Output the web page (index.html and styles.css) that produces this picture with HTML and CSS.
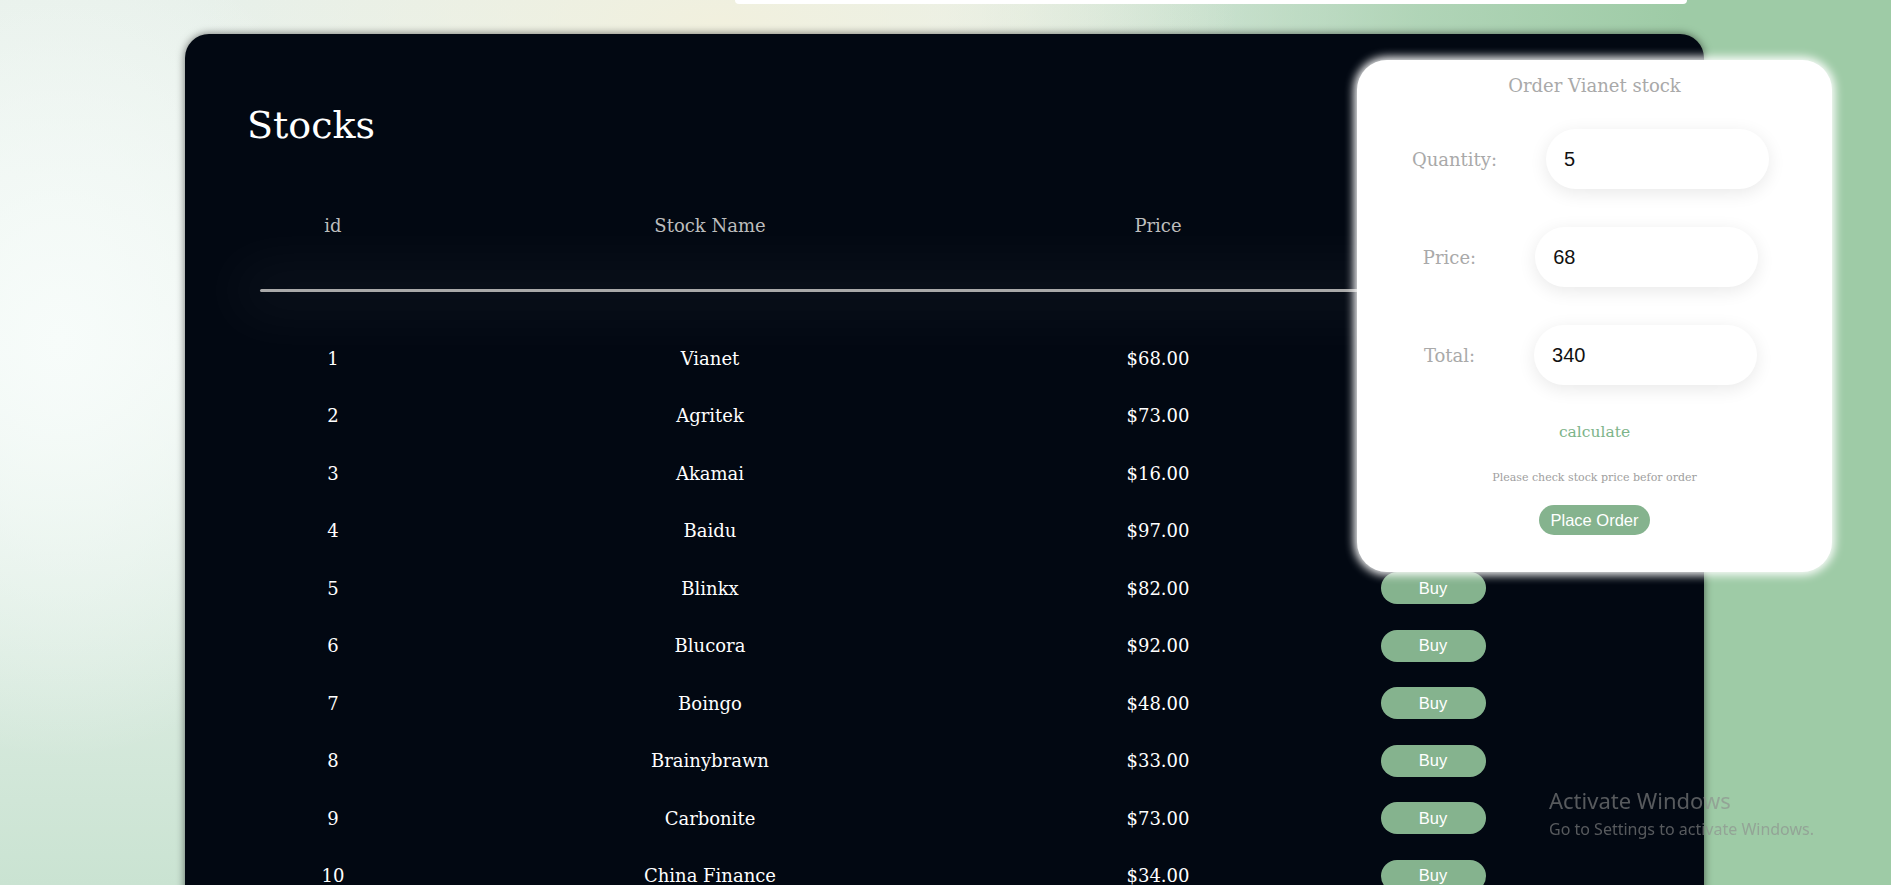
FILE: index.html
```html
<!DOCTYPE html>
<html lang="en">
<head>
<meta charset="utf-8">
<title>Stocks</title>
<link rel="stylesheet" href="styles.css">
</head>
<body>
<div class="topbar"></div>
<main class="card">
  <h1 class="card-title">Stocks</h1>
  <div class="table">
    <div class="row thead">
      <div>id</div><div>Stock Name</div><div>Price</div><div></div>
    </div>
    <div class="rule"></div>
    <div class="row"><div>1</div><div>Vianet</div><div>$68.00</div><div><button class="buy">Buy</button></div></div>
    <div class="row"><div>2</div><div>Agritek</div><div>$73.00</div><div><button class="buy">Buy</button></div></div>
    <div class="row"><div>3</div><div>Akamai</div><div>$16.00</div><div><button class="buy">Buy</button></div></div>
    <div class="row"><div>4</div><div>Baidu</div><div>$97.00</div><div><button class="buy">Buy</button></div></div>
    <div class="row"><div>5</div><div>Blinkx</div><div>$82.00</div><div><button class="buy">Buy</button></div></div>
    <div class="row"><div>6</div><div>Blucora</div><div>$92.00</div><div><button class="buy">Buy</button></div></div>
    <div class="row"><div>7</div><div>Boingo</div><div>$48.00</div><div><button class="buy">Buy</button></div></div>
    <div class="row"><div>8</div><div>Brainybrawn</div><div>$33.00</div><div><button class="buy">Buy</button></div></div>
    <div class="row"><div>9</div><div>Carbonite</div><div>$73.00</div><div><button class="buy">Buy</button></div></div>
    <div class="row"><div>10</div><div>China Finance</div><div>$34.00</div><div><button class="buy">Buy</button></div></div>
  </div>
</main>

<aside class="order">
  <h2 class="order-title">Order Vianet stock</h2>
  <div class="field field-qty">
    <label class="field-label">Quantity:</label>
    <input class="field-input" type="text" value="5">
  </div>
  <div class="field">
    <label class="field-label">Price:</label>
    <input class="field-input" type="text" value="68">
  </div>
  <div class="field">
    <label class="field-label">Total:</label>
    <input class="field-input" type="text" value="340">
  </div>
  <button class="calc">calculate</button>
  <p class="note">Please check stock price befor order</p>
  <button class="place">Place Order</button>
</aside>

<div class="watermark">
  <div class="wm-title">Activate Windows</div>
  <div class="wm-sub">Go to Settings to activate Windows.</div>
</div>
</body>
</html>
```

FILE: styles.css
```css
html, body {
  margin: 0;
  padding: 0;
}

body {
  height: 885px;
  overflow: hidden;
  font-family: "DejaVu Serif", "Liberation Serif", serif;
  background:
    radial-gradient(ellipse 320px 420px at 60px 340px, rgba(247,252,250,1) 0%, rgba(247,252,250,0) 100%),
    radial-gradient(ellipse 520px 160px at 720px 20px, rgba(241,240,222,1) 0%, rgba(241,240,222,0) 100%),
    linear-gradient(to right, rgba(158,203,166,0) 50%, rgba(158,203,166,0.75) 75%, #9ecba6 89%),
    linear-gradient(to bottom, #e7f0ea 0%, #eff6f2 40%, #cae3d2 100%);
}

.topbar {
  margin-left: 735px;
  width: 952px;
  height: 4px;
  background: #ffffff;
  border-radius: 0 0 10px 10px;
}

.card {
  margin: 30px 0 0 185px;
  width: 1519px;
  box-sizing: border-box;
  padding: 73px 62px 40px;
  background: #020812;
  border-radius: 24px;
  box-shadow: 0 0 9px rgba(0,0,0,0.55);
}

.card-title {
  margin: 0 0 52.5px;
  font-size: 38px;
  line-height: 37px;
  font-weight: normal;
  color: #ffffff;
}

.table {
  margin-left: 13px;
}

.row {
  display: grid;
  grid-template-columns: 146px 608px 288px 262px;
  height: 57.5px;
  align-items: center;
  text-align: center;
  font-size: 18px;
  color: #ffffff;
}

.thead {
  color: #bdbdbd;
}

.rule {
  margin: 34.75px 0 37.75px;
  width: 1400px;
  height: 3px;
  border-radius: 2px;
  background: #a9a9a9;
  box-shadow: 0 0 60px 26px rgba(255,255,255,0.045);
}

.buy {
  width: 105px;
  height: 32px;
  border: none;
  border-radius: 16px;
  background: #85b38e;
  color: #ffffff;
  font-family: "Liberation Sans", Arial, sans-serif;
  font-size: 16.5px;
  padding: 0;
}

.order {
  position: absolute;
  left: 1357px;
  top: 60px;
  width: 475px;
  height: 512px;
  box-sizing: border-box;
  padding-top: 14px;
  background: #ffffff;
  border-radius: 30px;
  box-shadow: 0 0 10px 3px #ffffff;
  display: flex;
  flex-direction: column;
  align-items: center;
}

.order-title {
  margin: 0 0 31px;
  font-size: 18px;
  line-height: 24px;
  font-weight: normal;
  color: #a9a9a9;
}

.field {
  width: 100%;
  box-sizing: border-box;
  padding-right: 8px;
  display: flex;
  align-items: center;
  justify-content: center;
  gap: 59px;
  margin-bottom: 38px;
}

.field-qty {
  gap: 49px;
}

.field-label {
  font-size: 18px;
  color: #a9a9a9;
}

.field-input {
  width: 223px;
  height: 60px;
  box-sizing: border-box;
  padding: 0 18px;
  border: none;
  outline: none;
  border-radius: 30px;
  background: #ffffff;
  box-shadow: 0 4px 18px rgba(0,0,0,0.09);
  font-family: "Liberation Sans", Arial, sans-serif;
  font-size: 20px;
  color: #111111;
}

.calc {
  margin-top: -1px;
  padding: 0;
  border: none;
  background: none;
  font-family: "DejaVu Serif", serif;
  font-size: 15.5px;
  line-height: 20px;
  color: #7db48a;
}

.note {
  margin: 29px 0 0;
  font-size: 11px;
  line-height: 14px;
  color: #a0a0a0;
}

.place {
  margin-top: 20px;
  height: 30px;
  padding: 0 11.5px;
  border: none;
  border-radius: 15px;
  background: #85b38e;
  color: #ffffff;
  font-family: "Liberation Sans", Arial, sans-serif;
  font-size: 16.5px;
}

.watermark {
  position: fixed;
  left: 1549px;
  top: 785px;
  font-family: "Noto Sans", "Open Sans", sans-serif;
  color: rgba(140,140,140,0.62);
}

.wm-title {
  font-size: 22px;
  line-height: 30px;
}

.wm-sub {
  margin-top: 3px;
  font-size: 16px;
  line-height: 22px;
}
```
